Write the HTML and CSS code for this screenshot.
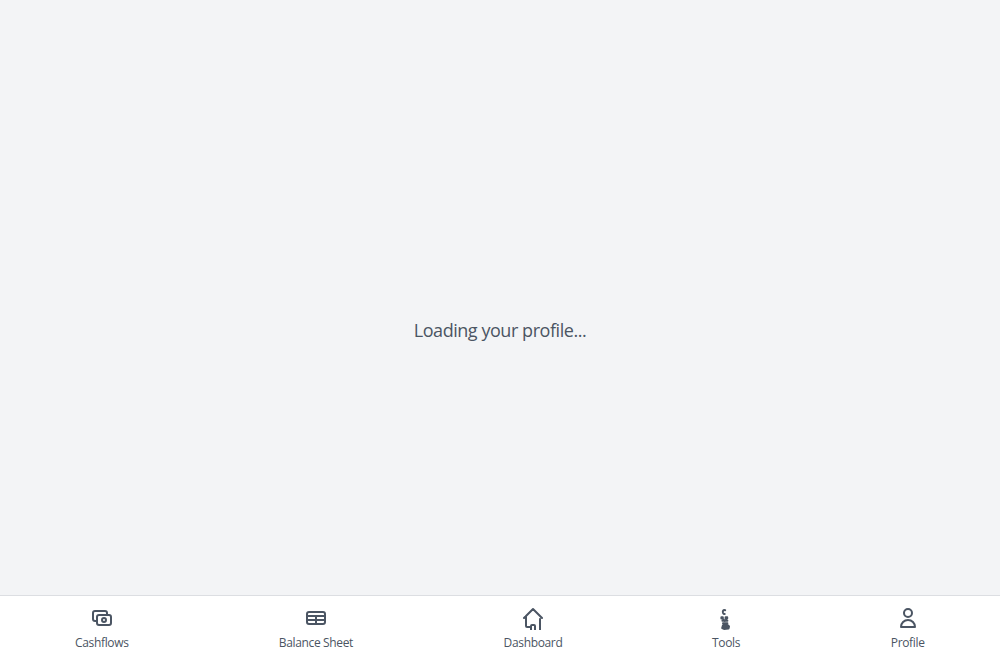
FILE: index.html
```html
<!DOCTYPE html>
<html lang="en">
<head>
<meta charset="utf-8">
<title>Profile</title>
<link rel="stylesheet" href="styles.css">
</head>
<body>
<main class="loading"><p class="message">Loading your profile...</p></main>
<nav class="tabs">
  <a class="tab cashflows"><svg class="icon" viewBox="0 0 24 24"><path d="M17 9V7a2 2 0 00-2-2H5a2 2 0 00-2 2v6a2 2 0 002 2h2m2 4h10a2 2 0 002-2v-6a2 2 0 00-2-2H9a2 2 0 00-2 2v6a2 2 0 002 2zm7-5a2 2 0 11-4 0 2 2 0 014 0z"/></svg><span class="label">Cashflows</span></a>
  <a class="tab balance"><svg class="icon" viewBox="0 0 24 24"><path d="M3 10h18M3 14h18m-9-4v8m-7 0h14a2 2 0 002-2V8a2 2 0 00-2-2H5a2 2 0 00-2 2v8a2 2 0 002 2z"/></svg><span class="label">Balance Sheet</span></a>
  <a class="tab dashboard"><svg class="icon" viewBox="0 0 24 24"><path d="M3 12l2-2m0 0l7-7 7 7M5 10v10a1 1 0 001 1h4m9-11l2 2M10 24v-4a1 1 0 011-1h2a1 1 0 011 1v4M19 13v11"/></svg><span class="label">Dashboard</span></a>
  <a class="tab tools"><svg class="icon" viewBox="0 0 24 24"><path d="M11.2 4.2c-2-.7-2.7 1-2.2 2.6.3.8.9 1.2 1.7 1.2M7.4 11.2h1.4v1.4h-1.4zM11.6 11.2h1.6v1.3h-1.6zM8.4 14.7h5M9.4 13.4l1.4 1.6 1.4-1.6M9 17.3h4.4M9 19.3h5l1 1.2-.5 2-4.5.4-1.8-.8zM9.5 21h4.5"/></svg><span class="label">Tools</span></a>
  <a class="tab profile"><svg class="icon" viewBox="0 0 24 24"><path d="M16 7a4 4 0 11-8 0 4 4 0 018 0zM12 14a7 7 0 00-7 7h14a7 7 0 00-7-7z"/></svg><span class="label">Profile</span></a>
</nav>
</body>
</html>
```
FILE: styles.css
```css
* { box-sizing: border-box; }
body {
  margin: 0;
  height: 660px;
  display: grid;
  grid-template-rows: 595px 65px;
  background: #f3f4f6;
  color: #4b5563;
  font-family: "Segoe UI", "Open Sans", "Noto Sans", sans-serif;
}
.loading {
  display: flex;
  justify-content: center;
  padding-top: 316px;
}
.message {
  margin: 0;
  font-size: 18px;
  line-height: 28px;
  letter-spacing: -0.45px;
  white-space: nowrap;
}
.tabs {
  display: flex;
  justify-content: space-around;
  background: #fff;
  border-top: 1px solid #dcdee2;
  padding-top: 10px;
}
.tab {
  display: flex;
  flex-direction: column;
  align-items: center;
}
.cashflows { width: 53px; }
.balance { width: 74px; }
.dashboard { width: 58px; padding-left: 1px; }
.tools { width: 28px; }
.profile { width: 34px; }
.icon {
  width: 24px;
  height: 24px;
  flex: none;
  fill: none;
  stroke: #4b5563;
  stroke-width: 2;
  stroke-linecap: round;
  stroke-linejoin: round;
}
.label {
  margin-top: 5px;
  font-size: 12px;
  line-height: 16px;
  letter-spacing: -0.35px;
  white-space: nowrap;
}
```
